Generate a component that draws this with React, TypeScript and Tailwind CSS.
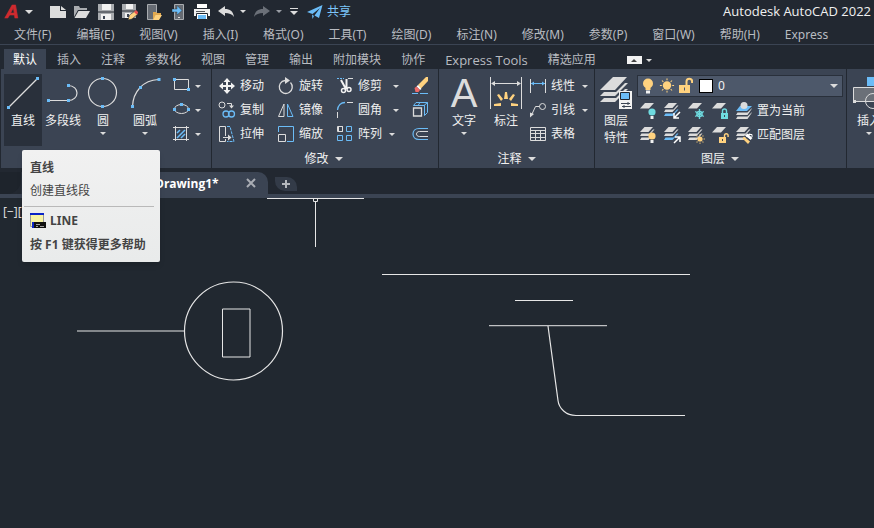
import { useState, type ReactNode } from "react";
import clsx from "clsx";

const LIGHT = "#dcdcdc";
const BLUE = "#6bbcf7";
const YELLOW = "#ffd27f";
const TEAL = "#6fdbe0";

const menus = [
  "文件(F)", "编辑(E)", "视图(V)", "插入(I)", "格式(O)", "工具(T)", "绘图(D)",
  "标注(N)", "修改(M)", "参数(P)", "窗口(W)", "帮助(H)", "Express",
];

const ribbonTabs = [
  "默认", "插入", "注释", "参数化", "视图", "管理", "输出", "附加模块", "协作", "Express Tools", "精选应用",
];

/* ---------- shared pieces ---------- */

const Icon = ({ children, size = 18 }: { children: ReactNode; size?: number }) => (
  <svg
    width={size}
    height={size}
    viewBox={`0 0 ${size} ${size}`}
    fill="none"
    stroke={LIGHT}
    className="shrink-0"
    aria-hidden="true"
  >
    {children}
  </svg>
);

const Caret = ({ className = "text-[#dcdcdc]", wide = false }: { className?: string; wide?: boolean }) => (
  <svg
    width={wide ? 8 : 6}
    height={wide ? 4 : 3}
    viewBox="0 0 8 4"
    className={clsx("shrink-0", className)}
    aria-hidden="true"
  >
    <path d="M0 0h8L4 4z" fill="currentColor" />
  </svg>
);

// grip points drawn on the ends of geometry icons
const Grip = ({ x, y, s = 3 }: { x: number; y: number; s?: number }) => (
  <rect x={x - s / 2} y={y - s / 2} width={s} height={s} fill={BLUE} stroke="none" />
);

/* ---------- title bar icons (16 x 16) ---------- */

const NewIcon = () => (
  <Icon size={16}>
    <path d="M0 2h10v5h6v7H0z" fill={LIGHT} stroke="none" />
    <path d="M11 2l5 4h-5z" fill={LIGHT} stroke="none" />
  </Icon>
);

const OpenIcon = () => (
  <Icon size={16}>
    <path d="M0 2h5l1 2h7v2H4L0 13z" fill="#a9acb0" stroke="none" />
    <path d="M4.500 7H16L12 14H0.500z" fill={LIGHT} stroke="none" />
  </Icon>
);

const SaveIcon = () => (
  <Icon size={16}>
    <path d="M0 0h16v16H0z" fill="#a9acb0" stroke="none" />
    <path d="M4 0h9v6H4zM3 10h10v6H3z" fill="#f2f2f2" stroke="none" />
    <path d="M5 12h2v3H5z" fill="#3b4453" stroke="none" />
    <path d="M0 8h16" stroke="#222831" />
  </Icon>
);

const SaveAsIcon = () => (
  <Icon size={16}>
    <path d="M0 0h14v14H0z" fill="#a9acb0" stroke="none" />
    <path d="M4 0h7v5H4zM3 9h7v5H3z" fill="#f2f2f2" stroke="none" />
    <path d="M0 7h14" stroke="#222831" />
    <path d="M5 10h2v3H5z" fill="#3b4453" stroke="none" />
    <path d="M6 16l1.500-5L13 7l3 3-6 5z" fill={YELLOW} stroke="#222831" strokeWidth={0.6} />
    <path d="M12 8l2-2 2.500 2.500-2 2z" fill="#e8504f" stroke="none" />
  </Icon>
);

const OpenMobileIcon = () => (
  <Icon size={16}>
    <path d="M1.500 0.500h9v15h-9z" fill="#666b73" stroke="#a9acb0" />
    <path d="M7 8h3l1 1h4v2h-5l-3 5z" fill="#e2a94f" stroke="none" />
    <path d="M9.500 11H16l-3 5H7z" fill={YELLOW} stroke="none" />
  </Icon>
);

const SaveMobileIcon = () => (
  <Icon size={16}>
    <path d="M4.500 0.500h9v15h-9z" fill="#666b73" stroke="#a9acb0" />
    <path d="M2 5h5V1.500L12 6.500 7 11V8H2z" fill={BLUE} stroke="#222831" strokeWidth={0.4} />
    <path d="M8 13.500h2" />
  </Icon>
);

const PrintIcon = () => (
  <Icon size={16}>
    <path d="M3 0h10v4H3z" fill="#fff" stroke="none" />
    <path d="M0 5h16v7H0z" fill="#f2f2f2" stroke="none" />
    <path d="M2.500 9.500h11v6h-11z" fill="#fff" stroke="#222831" />
    <path d="M4 11h8v4H4z" fill={BLUE} stroke="none" />
    <path d="M2 7.500h9" stroke="#55595f" />
  </Icon>
);

const ArrowIcon = ({ flip = false }: { flip?: boolean }) => (
  <Icon size={16}>
    <path
      d="M0 7l7-5v3c5 0 8 2 9 8-2-3-5-4-9-4v3z"
      fill={flip ? "#6b7078" : LIGHT}
      stroke="none"
      transform={flip ? "matrix(-1 0 0 1 16 0)" : undefined}
    />
  </Icon>
);

const ShareIcon = () => (
  <Icon size={16}>
    <path d="M0 8L15.500 1 12 14 7.500 11.500 13 4 5.500 10z" fill={BLUE} stroke="none" />
    <path d="M5 10.500l2 1.500-1.500 3z" fill={BLUE} stroke="none" />
  </Icon>
);

/* ---------- layer icons ---------- */

const Sheet = () => <path d="M1 6.500L6 1h9l-5 5.500z" fill={LIGHT} stroke="none" />;

const Stack = ({ accent = LIGHT }: { accent?: string }) => (
  <g stroke="none" fill={LIGHT}>
    <path d="M1 6L5.500 1H14L9.500 6z" />
    <path d="M1 10l1.500-2.500h8L14 3.500h1.500L9.500 10z" />
    <path d="M1 14l1.500-2.500h8L14 7.500h1.500L9.500 14z" fill={accent} />
  </g>
);

const Bulb = ({ color }: { color: string }) => (
  <g stroke="none">
    <circle cx={13} cy={10} r={3.6} fill={color} />
    <path d="M11.500 14h3v3h-3z" fill="#f2f2f2" />
  </g>
);

const Sun = ({ x, y, r }: { x: number; y: number; r: number }) => (
  <g stroke={YELLOW}>
    <circle cx={x} cy={y} r={r} fill={YELLOW} stroke="none" />
    {[0, 45, 90, 135, 180, 225, 270, 315].map((a) => (
      <path key={a} d={`M${x} ${y - r - 1}v${-r * 0.45}`} transform={`rotate(${a} ${x} ${y})`} />
    ))}
  </g>
);

const layerIcons: Record<string, ReactNode> = {
  关闭图层: <><Sheet /><Bulb color={TEAL} /></>,
  隔离图层: <><Stack accent={BLUE} /><path d="M17 10l-5.500 5.500M11 11v5h5" stroke="#fff" strokeWidth={1.5} /></>,
  冻结图层: (
    <>
      <Sheet />
      <g stroke={TEAL} strokeWidth={1.4}>
        <path d="M12.500 7v10M8.200 9.500l8.600 5M8.200 14.500l8.600-5" />
        <circle cx={12.5} cy={12} r={2.6} />
      </g>
    </>
  ),
  锁定图层: (
    <>
      <Sheet />
      <path d="M11.500 11V9a2 2 0 0 1 4 0v2" stroke={TEAL} strokeWidth={1.4} />
      <path d="M10 11h7v6h-7z" fill={TEAL} stroke="none" />
      <path d="M13.500 13v2" stroke="#3b4453" />
    </>
  ),
  置为当前: (
    <g stroke="none" fill={LIGHT}>
      <path d="M1 9l4-5h12l-5 5z" fill={BLUE} />
      <path d="M1 13l1.500-2.500h10l4-4H17L12.500 13zM1 17l1.500-2.500h10l4-4H17L12.500 17z" />
      <circle cx={9} cy={3.5} r={3.5} />
    </g>
  ),
  打开图层: <><Stack /><Bulb color={YELLOW} /></>,
  取消隔离: <><Stack accent={BLUE} /><path d="M11 17l5.500-5.500M17 16v-5h-5" stroke="#fff" strokeWidth={1.5} /></>,
  解冻图层: <><Stack /><Sun x={13} y={13} r={2.6} /></>,
  解锁图层: (
    <>
      <Sheet />
      <path d="M13.500 11V9.500a1.800 1.800 0 0 1 3.600 0V11" stroke={YELLOW} strokeWidth={1.4} />
      <path d="M8 11h7v6H8z" fill={YELLOW} stroke="none" />
      <path d="M11.500 13v2" stroke="#3b4453" />
    </>
  ),
  匹配图层: (
    <>
      <Stack />
      <path d="M10 9.500l2.500-2 5 4.500-2 2z" fill="#fff" stroke="none" />
      <path d="M9 10.500l6 5-2 2.500-5.500-5.500z" fill={YELLOW} stroke="none" />
      <path d="M9.500 10l6.500 5" stroke="#3b4453" />
      <path d="M14 8.500h3V11" stroke="#fff" />
    </>
  ),
};

const LayerPropsIcon = () => (
  <Icon size={32}>
    <g fill={LIGHT} stroke="none">
      <path d="M0 13L13 0h14L15 13z" />
      <path d="M0 19l4-4h12l9-9h3L15 19z" />
      <path d="M0 25l4-4h12l9-9h3L15 25z" />
    </g>
    <path d="M19 14h13v18H19z" fill="#f2f2f2" stroke="none" />
    <path d="M20.500 15.500h9v7h-9z" fill={BLUE} stroke="#222831" />
    <path d="M21 26.500h9M28 25v3M22 29.500h9M24 28v3" stroke="#3b4453" />
  </Icon>
);

/* ---------- draw / modify / annotate icons ---------- */

const LineIcon = () => (
  <Icon size={32}>
    <path d="M2 30L30 2" strokeWidth={1.2} />
    <Grip x={1.5} y={30.5} />
    <Grip x={30.5} y={1.5} />
  </Icon>
);

const PolylineIcon = () => (
  <Icon size={32}>
    <path d="M1 23.500h20c12 0 12-15 0-15" strokeWidth={1.2} />
    <Grip x={1.5} y={23.5} />
    <Grip x={21.5} y={23.5} />
    <Grip x={21.5} y={8.5} />
  </Icon>
);

const CircleIcon = () => (
  <Icon size={32}>
    <circle cx={15.5} cy={15.5} r={14} strokeWidth={1.2} />
    <Grip x={15.5} y={1.5} />
    <Grip x={15.5} y={29.5} />
  </Icon>
);

const ArcIcon = () => (
  <Icon size={32}>
    <path d="M3.500 29.500C4 15 14 3 29.500 2.500" strokeWidth={1.2} />
    <Grip x={3.5} y={29.5} />
    <Grip x={11.5} y={10.5} />
    <Grip x={30} y={2.5} />
  </Icon>
);

const DimensionIcon = () => (
  <Icon size={32}>
    <path d="M0.500 0v32M31.500 0v32M2 6.500h28" />
    <path d="M1 6.500l4-2.500v5zM31 6.500l-4-2.500v5z" fill={LIGHT} stroke="none" />
    <g fill={YELLOW} stroke="none">
      <path d="M15 15h2l1 7h-4zM7 18l2-1 4 5-2 2zM25 18l-2-1-4 5 2 2zM4 27l7-1v3H4zM28 27l-7-1v3h7z" />
    </g>
  </Icon>
);

const InsertIcon = () => (
  <Icon size={32}>
    <path d="M14 0h10v9H14z" fill={BLUE} stroke="none" />
    <path d="M0.500 10.500h30v14h-30z" fill="#6b7078" />
    <circle cx={20} cy={24} r={7.5} />
    <rect x={0} y={23} width={3} height={3} fill={LIGHT} stroke="none" />
  </Icon>
);

const drawSmall = [
  {
    label: "矩形",
    icon: (
      <>
        <path d="M2.500 2.500h14v10h-14z" />
        <Grip x={2.5} y={2.5} />
        <Grip x={16.5} y={12.5} />
      </>
    ),
  },
  {
    label: "椭圆",
    icon: (
      <>
        <ellipse cx={9.5} cy={8} rx={7} ry={4.5} />
        <Grip x={2.5} y={8.5} />
        <Grip x={16.5} y={8.5} />
        <Grip x={9.5} y={3.5} />
      </>
    ),
  },
  {
    label: "图案填充",
    icon: (
      <>
        <path d="M5 8l3-3M5 13l8-8M9 13l4-4" stroke={BLUE} strokeWidth={1.5} />
        <path d="M1 2.500h16M1 14.500h16M3.500 1v15M14.500 1v15" />
      </>
    ),
  },
];

type Tool = { label: string; icon: ReactNode; caret?: "near" | "far" };

const modifyTools: Tool[] = [
  {
    label: "移动",
    icon: (
      <>
        <path d="M9 3v12M3 9h12" strokeWidth={2} stroke="#f2f2f2" />
        <path d="M9 1l3.500 4h-7zM9 17l3.500-4h-7zM1 9l4-3.500v7zM17 9l-4-3.500v7z" fill="#f2f2f2" stroke="none" />
      </>
    ),
  },
  {
    label: "旋转",
    icon: (
      <>
        <path d="M13.500 5.500A6.500 6.500 0 1 1 8 3.500" strokeWidth={1.3} />
        <path d="M8 0l5 3.500L8 7z" fill={LIGHT} stroke="none" />
      </>
    ),
  },
  {
    label: "修剪",
    caret: "far",
    icon: (
      <>
        <path d="M1 1.500h7" stroke={BLUE} strokeDasharray="2 1" />
        <path d="M12 1.500h5" />
        <path d="M5 3l5 9M10.500 2v10" strokeWidth={2} stroke="#f2f2f2" />
        <circle cx={7.5} cy={13.5} r={2} stroke="#f2f2f2" strokeWidth={1.5} />
        <circle cx={13} cy={12.5} r={2} stroke="#f2f2f2" strokeWidth={1.5} />
      </>
    ),
  },
  {
    label: "删除",
    icon: (
      <>
        <path d="M7 8L15 0h2v4l-7.500 8z" fill={YELLOW} stroke="none" />
        <path d="M5.500 9.500L7 8l3.500 4L9 13z" fill="#fff" stroke="none" />
        <path d="M3.500 11l2-1.500L9 13l-1.500 2h-3z" fill="#ee6a67" stroke="none" />
        <path d="M1 16.500h6M9 16.500h8" stroke={BLUE} />
      </>
    ),
  },
  {
    label: "复制",
    icon: (
      <>
        <circle cx={4} cy={4} r={3} />
        <path d="M9 2.500h4.500V5" />
        <path d="M11 4.500h5l-2.500 3z" fill={LIGHT} stroke="none" />
        <circle cx={8} cy={13} r={3} stroke={BLUE} strokeWidth={1.3} />
        <circle cx={13.5} cy={13} r={3} stroke={BLUE} strokeWidth={1.3} />
      </>
    ),
  },
  {
    label: "镜像",
    icon: (
      <>
        <path d="M7 3v12.500H1.500z" />
        <path d="M10.500 3v12.500H16z" stroke={BLUE} />
      </>
    ),
  },
  {
    label: "圆角",
    caret: "far",
    icon: (
      <>
        <path d="M1.500 9C2 4.500 5 1.500 9 1.500" stroke={BLUE} strokeWidth={1.3} />
        <path d="M11 1.500h6M1.500 11v6" />
      </>
    ),
  },
  {
    label: "分解",
    icon: (
      <>
        <path d="M2.500 4.500L5 1.500h11.500v10l-3 3M13 4.500l3.500-3M2.500 4.500h11v10M9 1.500l-2 3" stroke={BLUE} />
        <path d="M2.500 7h8v8h-8z" strokeWidth={1.3} />
      </>
    ),
  },
  {
    label: "拉伸",
    icon: (
      <>
        <path d="M7.500 11V1.500h-6v15h6V14M5 12.500h6" />
        <path d="M10 9.500l3.500 3-3.500 3z" fill={LIGHT} stroke="none" />
        <path d="M9 1.500h3l4 15H9" stroke={BLUE} strokeDasharray="3 1" />
      </>
    ),
  },
  {
    label: "缩放",
    icon: (
      <>
        <path d="M1.500 7V1.500h15v15H10" stroke={BLUE} />
        <path d="M1.500 9.500h7v7h-7z" />
      </>
    ),
  },
  {
    label: "阵列",
    caret: "near",
    icon: (
      <>
        <path d="M2.500 1.500h4v5h-4z" />
        <path d="M10.500 1.500h5v5h-5zM1.500 10.500h5v5h-5zM10.500 10.500h5v5h-5z" stroke={BLUE} />
        <path d="M1.500 1.500h5v5h-5z" />
      </>
    ),
  },
  {
    label: "偏移",
    icon: (
      <>
        <path d="M17 3.500H8c-8 0-8 11 0 11h9" stroke={BLUE} strokeWidth={1.2} />
        <path d="M17 6.500H8.500c-4 0-4 5 0 5H17" />
      </>
    ),
  },
];

const annotateTools: Tool[] = [
  {
    label: "线性",
    caret: "near",
    icon: (
      <>
        <path d="M1.500 2v14M16.500 2v14" />
        <path d="M2 6.500h14" stroke={BLUE} />
        <path d="M2 6.500l3-2v4zM16 6.500l-3-2v4z" fill={BLUE} stroke="none" />
      </>
    ),
  },
  {
    label: "引线",
    caret: "near",
    icon: (
      <>
        <circle cx={13.5} cy={5.5} r={3} />
        <path d="M10.500 5.500h-4L3 13" />
        <path d="M1 16.500v-5l4 1.500z" fill={LIGHT} stroke="none" />
      </>
    ),
  },
  {
    label: "表格",
    icon: <path d="M1.500 2.500h15v13h-15zM1.500 5.500h15M1.500 8.500h15M1.500 12.500h15M6.500 5.500v10M11.500 5.500v10" />,
  },
];

/* ---------- ribbon building blocks ---------- */

const Panel = ({ title, className, children }: { title?: string; className?: string; children: ReactNode }) => (
  <section className={clsx("flex flex-col border-r border-[#222831]", className)}>
    <div className="flex min-h-[78px] items-start pt-[5px]">{children}</div>
    {title && (
      <button type="button" className="flex h-[21px] items-center justify-center gap-1.5 pt-0.5">
        {title}
        <Caret wide />
      </button>
    )}
  </section>
);

type BigButtonProps = {
  label: string;
  secondLine?: string;
  icon: ReactNode;
  caret?: boolean;
  active?: boolean;
  className?: string;
};

const BigButton = ({ label, secondLine, icon, caret, active, className = "w-[38px]" }: BigButtonProps) => (
  <button
    type="button"
    className={clsx(
      "flex h-[72px] shrink-0 flex-col items-center pt-[3px] leading-4",
      active && "bg-[#29303b]",
      className,
    )}
  >
    {icon}
    <span className="mt-1 whitespace-nowrap">{label}</span>
    {secondLine && <span className="mt-px whitespace-nowrap">{secondLine}</span>}
    {caret && <Caret className="mt-[3px] text-[#dcdcdc]" />}
  </button>
);

const ToolButton = ({ label, icon, caret, iconOnly }: Tool & { iconOnly?: boolean }) => (
  <button
    type="button"
    aria-label={iconOnly ? label : undefined}
    className="flex h-6 items-center gap-1 whitespace-nowrap"
  >
    <Icon>{icon}</Icon>
    {!iconOnly && label}
    {caret && <Caret className={caret === "far" ? "ml-[7px] text-[#dcdcdc]" : "ml-[3px] text-[#dcdcdc]"} />}
  </button>
);

const LayerSelect = () => (
  <div className="mt-px flex h-[22px] w-[206px] items-center border border-[#29303b] bg-[#4d586a] pl-[3px] pr-1">
    <svg width="52" height="18" viewBox="0 0 52 18" fill="none" className="shrink-0" aria-hidden="true">
      <circle cx="7" cy="6.500" r="5" fill={YELLOW} />
      <path d="M4.500 10h5v3h-5z" fill={YELLOW} />
      <path d="M5 13.500h4v3H5z" fill="#f2f2f2" />
      <Sun x={26} y={8.5} r={4.2} />
      <path d="M45.500 8V4.500a2.800 2.800 0 0 1 5.600 0V6" stroke={YELLOW} strokeWidth="2" />
      <path d="M38 8h11v8H38z" fill={YELLOW} />
      <path d="M43.500 10.500v3" stroke="#4d586a" />
    </svg>
    <span className="ml-[6px] h-[14px] w-[14px] shrink-0 border border-black bg-white" />
    <select
      aria-label="图层"
      className="h-5 min-w-0 flex-1 appearance-none bg-transparent pl-[5px] text-[12px] leading-5 text-[#f0f0f0] outline-none"
    >
      <option>0</option>
    </select>
    <Caret wide />
  </div>
);

const layerRows = [
  { small: ["关闭图层", "隔离图层", "冻结图层", "锁定图层"], label: "置为当前" },
  { small: ["打开图层", "取消隔离", "解冻图层", "解锁图层"], label: "匹配图层" },
];

const quickAccess = [
  { label: "新建", Glyph: NewIcon },
  { label: "打开", Glyph: OpenIcon },
  { label: "保存", Glyph: SaveIcon },
  { label: "另存为", Glyph: SaveAsIcon },
  { label: "从移动设备打开", Glyph: OpenMobileIcon },
  { label: "保存到移动设备", Glyph: SaveMobileIcon },
  { label: "打印", Glyph: PrintIcon },
];

/* ---------- page sections ---------- */

const TitleBar = () => (
  <header className="flex h-[23px] items-center pl-1 pr-[3px]">
    <button type="button" aria-label="应用程序菜单" className="flex items-center gap-1">
      <svg width="17" height="23" viewBox="0 0 17 23" aria-hidden="true">
        <text
          x="1"
          y="18"
          fontFamily="Liberation Sans"
          fontSize="19"
          fontWeight="700"
          fontStyle="italic"
          fill="#cf2a2e"
          stroke="#cf2a2e"
          strokeWidth="0.600"
        >
          A
        </text>
      </svg>
      <Caret wide />
    </button>
    <div className="ml-[17px] flex items-center gap-2">
      {quickAccess.map(({ label, Glyph }) => (
        <button type="button" key={label} aria-label={label}>
          <Glyph />
        </button>
      ))}
      <button type="button" aria-label="放弃" className="flex items-center gap-1.5">
        <ArrowIcon />
        <Caret />
      </button>
      <button type="button" aria-label="重做" className="flex items-center gap-1.5">
        <ArrowIcon flip />
        <Caret className="text-[#9a9ea5]" />
      </button>
      <button type="button" aria-label="自定义快速访问工具栏" className="flex w-2 flex-col items-center gap-[2px]">
        <span className="h-px w-2 bg-[#dcdcdc]" />
        <Caret wide />
      </button>
    </div>
    <button type="button" className="ml-[9px] flex items-center gap-1 text-[#7cc6fb]">
      <ShareIcon />
      共享
    </button>
    <h1 className="ml-auto whitespace-nowrap font-['Open_Sans',sans-serif] text-[13px] text-[#f0f0f0]">
      Autodesk AutoCAD 2022
    </h1>
  </header>
);

const FileTabs = () => (
  <div className="flex h-[26px] items-end bg-[#222831]">
    <div className="h-[22px] w-[21px] rounded-br-[14px] bg-[#1e242c]" />
    <div className="h-[22px] w-[118px] bg-[#2b323d]" />
    <div className="flex h-[22px] w-[129px] items-center justify-between rounded-tr-[10px] bg-[#3b4453] pl-4 pr-3">
      <button type="button" className="pt-px font-['Open_Sans',sans-serif] text-[12px] font-bold text-white">
        Drawing1*
      </button>
      <button type="button" aria-label="关闭">
        <svg width="10" height="10" viewBox="0 0 10 10" className="block" aria-hidden="true">
          <path d="M1 1l8 8M9 1L1 9" stroke="#a9adb4" strokeWidth="2" />
        </svg>
      </button>
    </div>
    <button
      type="button"
      aria-label="新图形"
      className="mb-[3px] ml-[7px] flex h-[14px] w-[22px] items-center justify-center rounded-bl-[10px] rounded-tr-[10px] bg-[#333b48]"
    >
      <svg width="8" height="8" viewBox="0 0 8 8" aria-hidden="true">
        <path d="M4 0v8M0 4h8" stroke="#b4b8be" strokeWidth="2" />
      </svg>
    </button>
  </div>
);

const DrawingArea = () => (
  <main className="relative min-h-[300px] flex-1 overflow-hidden border-t-4 border-[#3b4453] bg-[#212830]">
    <p className="pl-[3px] pt-[5px] text-[12px] leading-[18px] text-[#dcdcdc]">[−][</p>
    <svg className="absolute inset-0 h-full w-full" fill="none" stroke="#e6e6e6" aria-hidden="true">
      <circle cx="233.500" cy="133" r="49" strokeWidth="1.200" />
      <path d="M222.500 111h27.500v48h-27.500zM77 133h107" />
      <path d="M382 76.500h308M515 102.500h58M489 127.700h118" />
      <path d="M548 128l10 74.500c1 8 8 15 18 15h109" strokeWidth="1.200" />
      <path d="M267 0.500h97M315.500 4v45M313.500 0.500h4v3h-4z" />
    </svg>
  </main>
);

const CommandTooltip = () => (
  <div
    role="tooltip"
    className="absolute left-[22px] top-[150px] w-[138px] rounded-[2px] bg-linear-to-b from-[#f1f1f1] to-[#e9ebeb] px-2 pt-[9px] pb-2 text-[#444444] shadow-md"
  >
    <p className="font-bold leading-[18px]">直线</p>
    <p className="mt-[5px] leading-[18px]">创建直线段</p>
    <hr className="-ml-1.5 mr-[-2px] mt-1.5 border-[#b9b9b9]" />
    <p className="mt-[5px] flex items-center gap-1 font-bold leading-[18px]">
      <svg width="16" height="16" viewBox="0 0 16 16" aria-hidden="true">
        <path d="M0.500 1.500h13v12H0.500z" fill="#f7f4a4" stroke="#9a9a9a" />
        <path d="M0 0h14v2H0z" fill="#0a24c8" />
        <path d="M2 9h14v6H2z" fill="#111" />
        <path d="M2 9h2v6H2z" fill="#0a24c8" />
        <path d="M6 11.500h4M6 13.500h2M10 13.500h4" stroke="#a0a0a0" />
      </svg>
      LINE
    </p>
    <p className="mt-1.5 whitespace-nowrap font-bold leading-[18px]">按 F1 键获得更多帮助</p>
  </div>
);

const App = () => {
  const [tab, setTab] = useState("默认");

  return (
    <div className="relative flex min-h-screen w-full flex-col overflow-hidden bg-[#222831] font-['Noto_Sans','Noto_Sans_CJK_SC',sans-serif] text-[12px] text-[#f0f0f0]">
      <TitleBar />

      <nav className="flex h-[22px] items-center gap-[25px] whitespace-nowrap border-b border-[#3b4453] pl-[14px] pt-0.5 text-[#b9bcc1]">
        {menus.map((m) => (
          <button type="button" key={m}>{m}</button>
        ))}
      </nav>

      <div className="flex h-6 items-end gap-0.5 pl-1">
        {ribbonTabs.map((t) => (
          <button
            type="button"
            key={t}
            onClick={() => setTab(t)}
            className={clsx(
              "h-5 whitespace-nowrap px-[9px] leading-[22px]",
              t === tab ? "bg-[#3b4453] text-white" : "text-[#b9bcc1]",
              t === "Express Tools" && "font-['Open_Sans',sans-serif] text-[13px]",
            )}
          >
            {t}
          </button>
        ))}
        <button type="button" aria-label="最小化功能区" className="ml-5 flex h-5 items-center gap-1 pt-0.5">
          <span className="flex h-2 w-[15px] items-center justify-center bg-[#f2f2f2]">
            <Caret className="rotate-180 text-[#444444]" />
          </span>
          <Caret />
        </button>
      </div>

      <div className="ml-px flex overflow-hidden bg-[#3b4453] leading-4">
        <Panel className="shrink-0 pl-[3px] pr-2.5">
          <div className="flex gap-0.5">
            <BigButton label="直线" icon={<LineIcon />} active />
            <BigButton label="多段线" icon={<PolylineIcon />} />
            <BigButton label="圆" icon={<CircleIcon />} caret />
            <BigButton label="圆弧" icon={<ArcIcon />} caret className="w-[42px]" />
          </div>
          <div className="ml-1.5 flex flex-col">
            {drawSmall.map((d) => (
              <button type="button" key={d.label} aria-label={d.label} className="flex h-6 items-center gap-[5px]">
                <Icon>{d.icon}</Icon>
                <Caret />
              </button>
            ))}
          </div>
        </Panel>

        <Panel title="修改" className="shrink-0 pl-1.5 pr-[9px]">
          <div className="grid grid-cols-[59px_59px_75px_18px]">
            {modifyTools.map((t, i) => (
              <ToolButton key={t.label} {...t} iconOnly={i % 4 === 3} />
            ))}
          </div>
        </Panel>

        <Panel title="注释" className="shrink-0 pl-1.5 pr-1.5">
          <BigButton
            label="文字"
            caret
            icon={<span className="h-8 font-['Liberation_Sans'] text-[40px] leading-8 text-[#dcdcdc]">A</span>}
          />
          <BigButton label="标注" icon={<DimensionIcon />} className="ml-1 w-[38px]" />
          <div className="ml-1 flex flex-col">
            {annotateTools.map((t) => (
              <ToolButton key={t.label} {...t} />
            ))}
          </div>
        </Panel>

        <Panel title="图层" className="shrink-0 pl-0.5 pr-[3px]">
          <BigButton label="图层" secondLine="特性" icon={<LayerPropsIcon />} />
          <div className="ml-0.5">
            <LayerSelect />
            {layerRows.map((row, i) => (
              <div key={row.label} className={clsx("flex h-6 items-center gap-1.5 pl-0.5", i === 0 && "mt-0.5")}>
                {row.small.map((name) => (
                  <button type="button" key={name} aria-label={name}>
                    <Icon>{layerIcons[name]}</Icon>
                  </button>
                ))}
                <ToolButton label={row.label} icon={layerIcons[row.label]} />
              </div>
            ))}
          </div>
        </Panel>

        <section className="min-w-0 flex-1 overflow-hidden pl-1 pt-[5px]">
          <BigButton label="插入" icon={<InsertIcon />} caret className="w-9" />
        </section>
      </div>

      <FileTabs />
      <DrawingArea />
      <CommandTooltip />
    </div>
  );
};

export default App;
